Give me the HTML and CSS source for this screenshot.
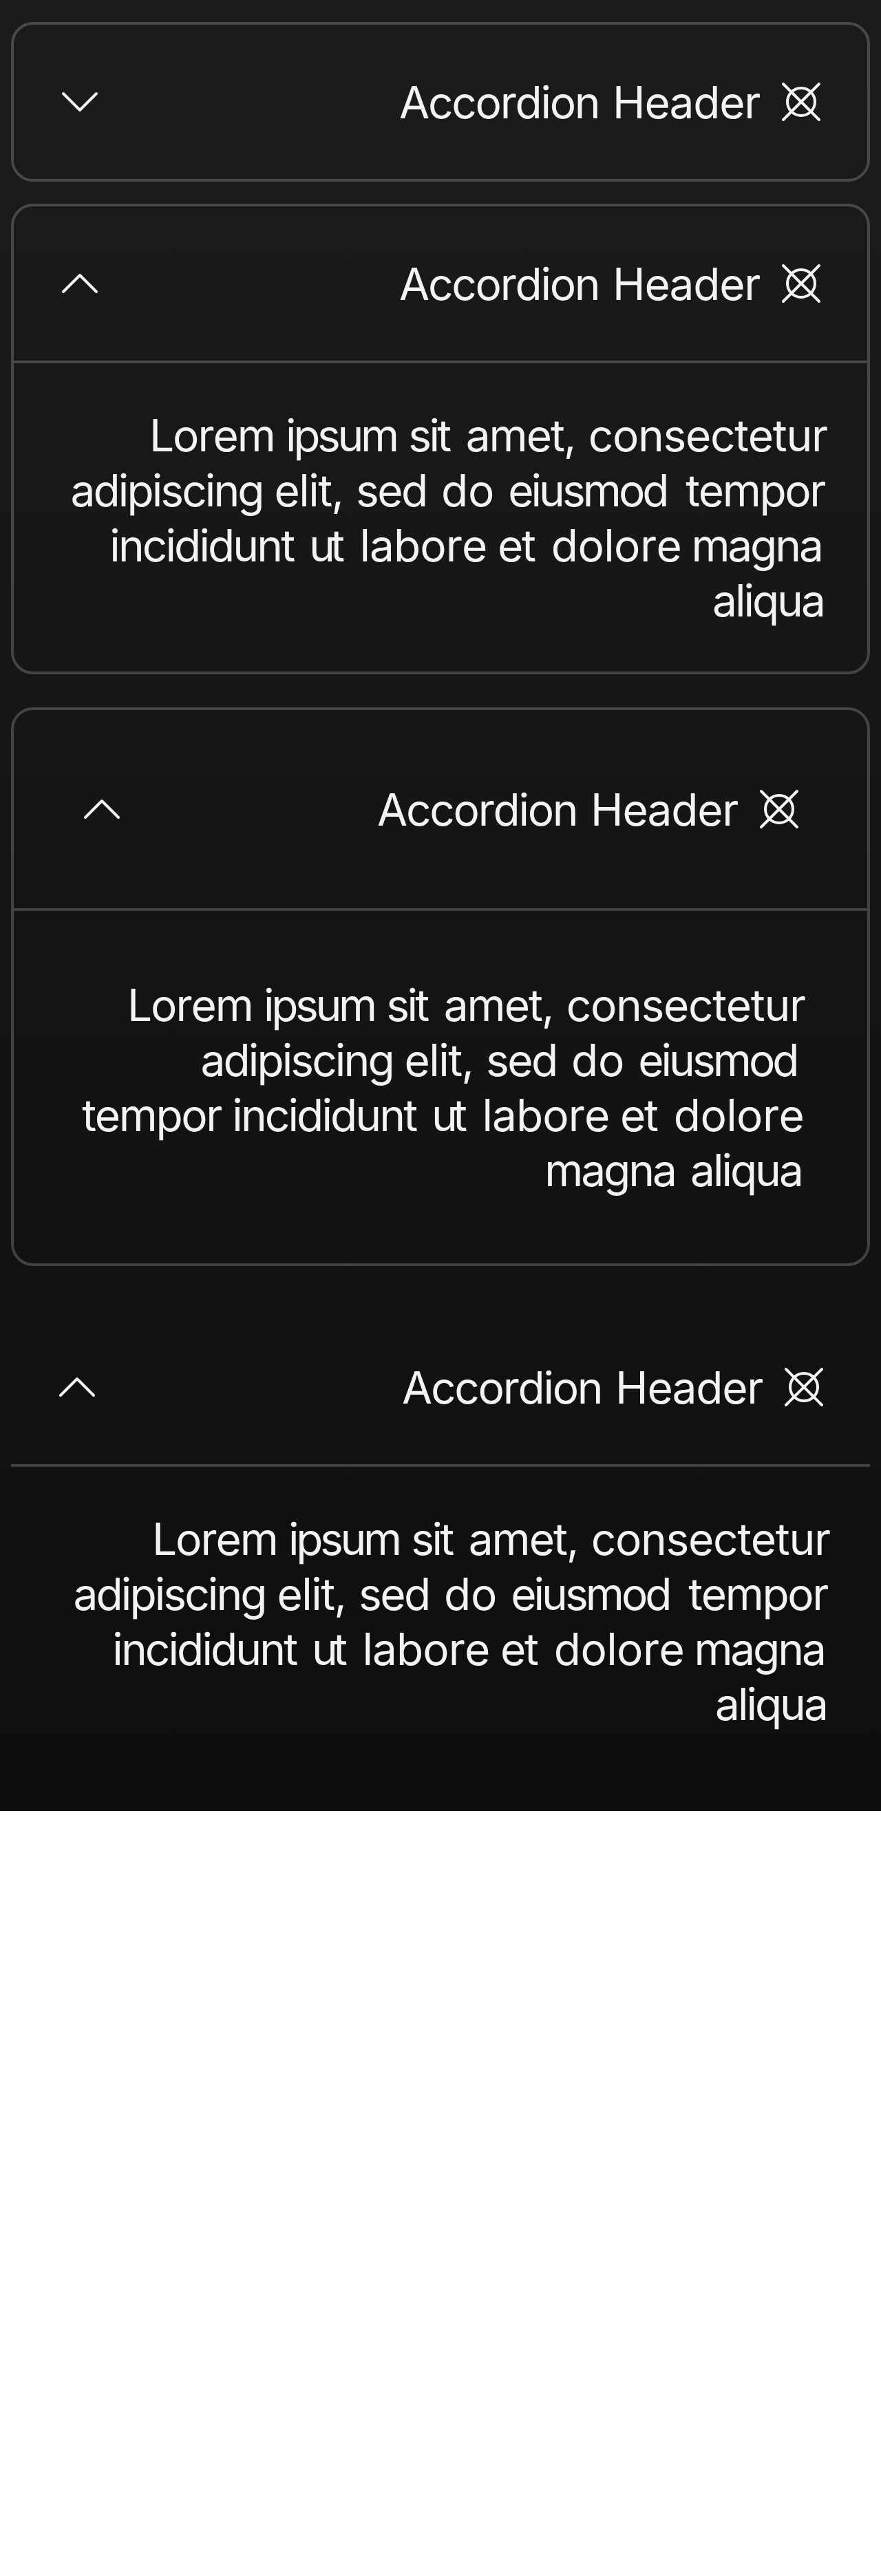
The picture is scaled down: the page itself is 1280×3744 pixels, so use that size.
FILE: index.html
```html
<!DOCTYPE html>
<html lang="en">
<head>
<meta charset="utf-8">
<title>Accordion</title>
<link rel="stylesheet" href="styles.css">
</head>
<body>
<svg class="sprite" width="0" height="0">
  <symbol id="down" viewBox="0 0 24 24"><path d="M6 9l6 6 6-6"/></symbol>
  <symbol id="up" viewBox="0 0 24 24"><path d="M6 15l6-6 6 6"/></symbol>
  <symbol id="marker" viewBox="0 0 24 24"><circle cx="12" cy="12" r="5"/><path d="M5.5 5.5l13 13M18.5 5.5l-13 13"/></symbol>
</svg>
<main class="stage">
  <section class="accordion">
    <header class="header"><svg class="icon"><use href="#down"/></svg><span class="title"><span class="w-accordion">Accordion</span> <span class="w-header">Header</span></span><svg class="icon"><use href="#marker"/></svg></header>
  </section>
  <section class="accordion">
    <header class="header"><svg class="icon"><use href="#up"/></svg><span class="title"><span class="w-accordion">Accordion</span> <span class="w-header">Header</span></span><svg class="icon"><use href="#marker"/></svg></header>
    <p class="body"><span class="w-lorem">Lorem</span> <span class="w-ipsum">ipsum</span> <span class="w-sit">sit</span> <span class="w-amet">amet,</span> <span class="w-consectetur">consectetur</span> <span class="w-adipiscing">adipiscing</span> <span class="w-elit">elit,</span> <span class="w-sed">sed</span> <span class="w-do">do</span> <span class="w-eiusmod">eiusmod</span> <span class="w-tempor">tempor</span> <span class="w-incididunt">incididunt</span> <span class="w-ut">ut</span> <span class="w-labore">labore</span> <span class="w-et">et</span> <span class="w-dolore">dolore</span> <span class="w-magna">magna</span> <span class="w-aliqua">aliqua</span></p>
  </section>
  <section class="accordion spacious">
    <header class="header"><svg class="icon"><use href="#up"/></svg><span class="title"><span class="w-accordion">Accordion</span> <span class="w-header">Header</span></span><svg class="icon"><use href="#marker"/></svg></header>
    <p class="body"><span class="w-lorem">Lorem</span> <span class="w-ipsum">ipsum</span> <span class="w-sit">sit</span> <span class="w-amet">amet,</span> <span class="w-consectetur">consectetur</span> <span class="w-adipiscing">adipiscing</span> <span class="w-elit">elit,</span> <span class="w-sed">sed</span> <span class="w-do">do</span> <span class="w-eiusmod">eiusmod</span> <span class="w-tempor">tempor</span> <span class="w-incididunt">incididunt</span> <span class="w-ut">ut</span> <span class="w-labore">labore</span> <span class="w-et">et</span> <span class="w-dolore">dolore</span> <span class="w-magna">magna</span> <span class="w-aliqua">aliqua</span></p>
  </section>
  <section class="accordion plain">
    <header class="header"><svg class="icon"><use href="#up"/></svg><span class="title"><span class="w-accordion">Accordion</span> <span class="w-header">Header</span></span><svg class="icon"><use href="#marker"/></svg></header>
    <p class="body"><span class="w-lorem">Lorem</span> <span class="w-ipsum">ipsum</span> <span class="w-sit">sit</span> <span class="w-amet">amet,</span> <span class="w-consectetur">consectetur</span> <span class="w-adipiscing">adipiscing</span> <span class="w-elit">elit,</span> <span class="w-sed">sed</span> <span class="w-do">do</span> <span class="w-eiusmod">eiusmod</span> <span class="w-tempor">tempor</span> <span class="w-incididunt">incididunt</span> <span class="w-ut">ut</span> <span class="w-labore">labore</span> <span class="w-et">et</span> <span class="w-dolore">dolore</span> <span class="w-magna">magna</span> <span class="w-aliqua">aliqua</span></p>
  </section>
</main>
</body>
</html>
```
FILE: styles.css
```css
* { box-sizing: border-box; }

body {
  margin: 0;
  background: #fff;
}

.sprite { display: none; }

.stage {
  width: 1280px;
  height: 2632px;
  padding: 32px 16px 52px;
  background: linear-gradient(#1b1b1b, #0e0e0e);
  color: #f3f3f3;
  font: 400 64px/80px Inter, "Liberation Sans", sans-serif;
  font-kerning: none;
  word-spacing: 1px;
}

.accordion {
  border: 4px solid rgba(255, 255, 255, 0.2);
  border-radius: 32px;
  margin-bottom: 32px;
}

.header {
  display: flex;
  align-items: center;
  gap: 16px;
  height: 224px;
  padding: 0 48px;
}

.title {
  flex: 1;
  padding-top: 2px;
  text-align: right;
  white-space: nowrap;
}

.icon {
  flex: none;
  width: 96px;
  height: 96px;
  fill: none;
  stroke: currentColor;
  stroke-width: 1;
  stroke-linecap: round;
  stroke-linejoin: round;
}

.body {
  margin: 0;
  padding: 65px 64px 63px;
  border-top: 4px solid rgba(255, 255, 255, 0.2);
  text-align: right;
}

.spacious {
  margin-top: 48px;
  margin-bottom: 64px;
}

.spacious .header {
  height: 288px;
  padding: 0 80px;
}

.spacious .body { padding: 97px 96px 95px 80px; }

.plain {
  border: 0;
  border-radius: 0;
  margin-bottom: 0;
}

/* Per-word tracking */
.w-accordion { letter-spacing: -2.25px; margin: 0 0.6px 0 0; }
.w-header { letter-spacing: -1.22px; margin: 0 -4.2px 0 0.13px; }
.w-lorem { letter-spacing: -2.04px; margin: 0 -2.83px 0 0.01px; }
.w-ipsum { letter-spacing: -4.36px; margin: 0 -1.7px 0 0.13px; }
.w-sit { letter-spacing: -3.64px; margin: 0 5.42px 0 0.29px; }
.w-amet { letter-spacing: -1.99px; margin: 0 0.57px 0 -0.32px; }
.w-consectetur { letter-spacing: -1.34px; margin: 0 -5.66px 0 -0.12px; }
.w-adipiscing { letter-spacing: -2.9px; margin: 0 -1.76px 0 0.5px; }
.w-elit { letter-spacing: -1.55px; margin: 0 -0.5px 0 -0.44px; }
.w-sed { letter-spacing: -2.55px; margin: 0 2.44px 0 -0.08px; }
.w-do { letter-spacing: -0.19px; margin: 0 0.81px 0 0; }
.w-eiusmod { letter-spacing: -3.95px; margin: 0 6.4px 0 0.2px; }
.w-tempor { letter-spacing: -2.4px; margin: 0 -1.91px 0 2.36px; }
.w-incididunt { letter-spacing: -2.9px; margin: 0 3.77px 0 -0.66px; }
.w-ut { letter-spacing: -6.84px; margin: 0 8.91px 0 0; }
.w-labore { letter-spacing: -0.92px; margin: 0 -3.41px 0 0.52px; }
.w-et { letter-spacing: -2.31px; margin: 0 4.38px 0 0; }
.w-dolore { letter-spacing: -0.6px; margin: 0 -4.12px 0 0.86px; }
.w-magna { letter-spacing: -3.13px; margin: 0 2.27px 0 -0.61px; }
.w-aliqua { letter-spacing: -3px; margin: 0 -0.9px 0 1px; }
```
